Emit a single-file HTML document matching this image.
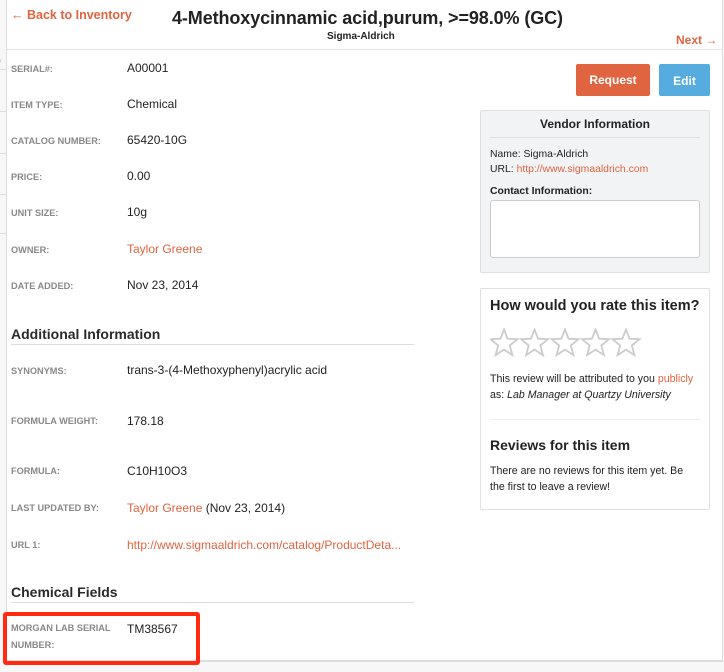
<!DOCTYPE html>
<html><head><meta charset="utf-8"><style>
*{margin:0;padding:0;box-sizing:border-box}
body{width:724px;height:672px;background:#f7f7f7;font-family:"Liberation Sans",sans-serif;color:#333;position:relative;overflow:hidden}
.a{position:absolute;white-space:nowrap}
.page{position:absolute;left:6px;top:0;width:717px;height:662px;background:#fff;border-left:1px solid #ddd;border-right:1px solid #ddd;border-bottom:1px solid #ddd}
.lbl{font-size:9.2px;font-weight:bold;color:#888;left:11px}
.val{font-size:12px;color:#222;left:127px}
.or{color:#e0643f}
.h{font-size:14px;font-weight:bold;color:#2a2a2a;left:11px}
.hr{position:absolute;height:1px;background:#ddd}
</style></head><body>
<div class="hr" style="left:0;top:69px;width:6px"></div>
<div class="hr" style="left:0;top:111px;width:6px"></div>
<div class="hr" style="left:0;top:153px;width:6px"></div>
<div class="hr" style="left:0;top:194px;width:6px"></div>
<div class="hr" style="left:0;top:233px;width:6px"></div>
<div class="a" style="left:-3px;top:53px;font-size:12px;color:#555">)</div>
<div class="page"></div>
<div class="a or" style="left:11px;top:8px;font-size:12.5px;font-weight:bold">← Back to Inventory</div>
<div class="a" style="left:172px;top:8px;font-size:18px;font-weight:bold;color:#222;letter-spacing:-0.1px">4-Methoxycinnamic acid,purum, &gt;=98.0% (GC)</div>
<div class="a" style="left:327px;top:31px;font-size:10px;font-weight:bold;color:#222">Sigma-Aldrich</div>
<div class="a or" style="left:676px;top:33px;font-size:12px;font-weight:bold">Next →</div>
<div class="hr" style="left:7px;top:49px;width:716px;background:#e3e3e3"></div>

<div class="a lbl" style="top:64px">SERIAL#:</div><div class="a val" style="top:61px">A00001</div>
<div class="a lbl" style="top:100px">ITEM TYPE:</div><div class="a val" style="top:97px">Chemical</div>
<div class="a lbl" style="top:136px">CATALOG NUMBER:</div><div class="a val" style="top:133px">65420-10G</div>
<div class="a lbl" style="top:172px">PRICE:</div><div class="a val" style="top:169px">0.00</div>
<div class="a lbl" style="top:208px">UNIT SIZE:</div><div class="a val" style="top:205px">10g</div>
<div class="a lbl" style="top:245px">OWNER:</div><div class="a val or" style="top:242px">Taylor Greene</div>
<div class="a lbl" style="top:281px">DATE ADDED:</div><div class="a val" style="top:278px">Nov 23, 2014</div>

<div class="a h" style="top:326px">Additional Information</div>
<div class="hr" style="left:11px;top:344px;width:403px"></div>
<div class="a lbl" style="top:366px">SYNONYMS:</div><div class="a val" style="top:363px">trans-3-(4-Methoxyphenyl)acrylic acid</div>
<div class="a lbl" style="top:416px">FORMULA WEIGHT:</div><div class="a val" style="top:414px">178.18</div>
<div class="a lbl" style="top:466px">FORMULA:</div><div class="a val" style="top:464px">C10H10O3</div>
<div class="a lbl" style="top:503px">LAST UPDATED BY:</div><div class="a val" style="top:501px"><span class="or">Taylor Greene</span> (Nov 23, 2014)</div>
<div class="a lbl" style="top:540px">URL 1:</div><div class="a val or" style="top:538px">http://www.sigmaaldrich.com/catalog/ProductDeta...</div>

<div class="a h" style="top:584px">Chemical Fields</div>
<div class="hr" style="left:11px;top:602px;width:403px"></div>
<div class="hr" style="left:7px;top:660px;width:716px"></div>
<div class="a" style="left:3px;top:612px;width:197px;height:53px;border:4px solid #ff2a10;border-radius:3px"></div>
<div class="a lbl" style="top:620px;line-height:17px">MORGAN LAB SERIAL<br>NUMBER:</div>
<div class="a val" style="top:622px">TM38567</div>

<div class="a" style="left:576px;top:64px;width:74px;height:32px;background:#e0643f;border-radius:2px;color:#fff;font-size:12px;font-weight:bold;text-align:center;line-height:32px">Request</div>
<div class="a" style="left:659px;top:64px;width:51px;height:32px;background:#56acdf;border-radius:2px;color:#fff;font-size:12px;font-weight:bold;text-align:center;line-height:34px">Edit</div>

<div class="a" style="left:480px;top:110px;width:230px;height:163px;background:#f2f3f5;border:1px solid #e0e0e0;border-radius:2px"></div>
<div class="a" style="left:480px;top:117px;width:230px;text-align:center;font-size:12px;font-weight:bold;color:#222">Vendor Information</div>
<div class="hr" style="left:490px;top:137px;width:210px"></div>
<div class="a" style="left:490px;top:147px;font-size:10.4px;color:#222;line-height:15px">Name: Sigma-Aldrich<br>URL: <span class="or">http://www.sigmaaldrich.com</span></div>
<div class="a" style="left:490px;top:186px;font-size:10.4px;font-weight:bold;color:#222">Contact Information:</div>
<div class="a" style="left:490px;top:200px;width:210px;height:58px;background:#fff;border:1px solid #ccc;border-radius:3px"></div>

<div class="a" style="left:480px;top:288px;width:230px;height:222px;border:1px solid #e0e0e0;border-radius:2px"></div>
<div class="a" style="left:490px;top:298px;font-size:14.5px;font-weight:bold;color:#222">How would you rate this item?</div>
<svg class="a" style="left:490px;top:328px" width="155" height="30" viewBox="0 0 155 30">
<g fill="none" stroke="#ccc" stroke-width="1.8">
<path id="s" d="M14 1.5l3.6 9.2 9.9.5-7.7 6.3 2.6 9.6L14 21.6l-8.4 5.5 2.6-9.6L.5 11.2l9.9-.5z"/>
<use href="#s" x="30.5"/><use href="#s" x="61"/><use href="#s" x="91.5"/><use href="#s" x="122"/>
</g></svg>
<div class="a" style="left:490px;top:371px;font-size:10.6px;color:#222;line-height:16px">This review will be attributed to you <span class="or">publicly</span><br>as: <i>Lab Manager at Quartzy University</i></div>
<div class="hr" style="left:490px;top:419px;width:210px;background:#eee"></div>
<div class="a" style="left:490px;top:437px;font-size:14px;font-weight:bold;color:#222">Reviews for this item</div>
<div class="a" style="left:490px;top:463px;font-size:10.6px;color:#222;line-height:16px">There are no reviews for this item yet. Be<br>the first to leave a review!</div>
</body></html>
